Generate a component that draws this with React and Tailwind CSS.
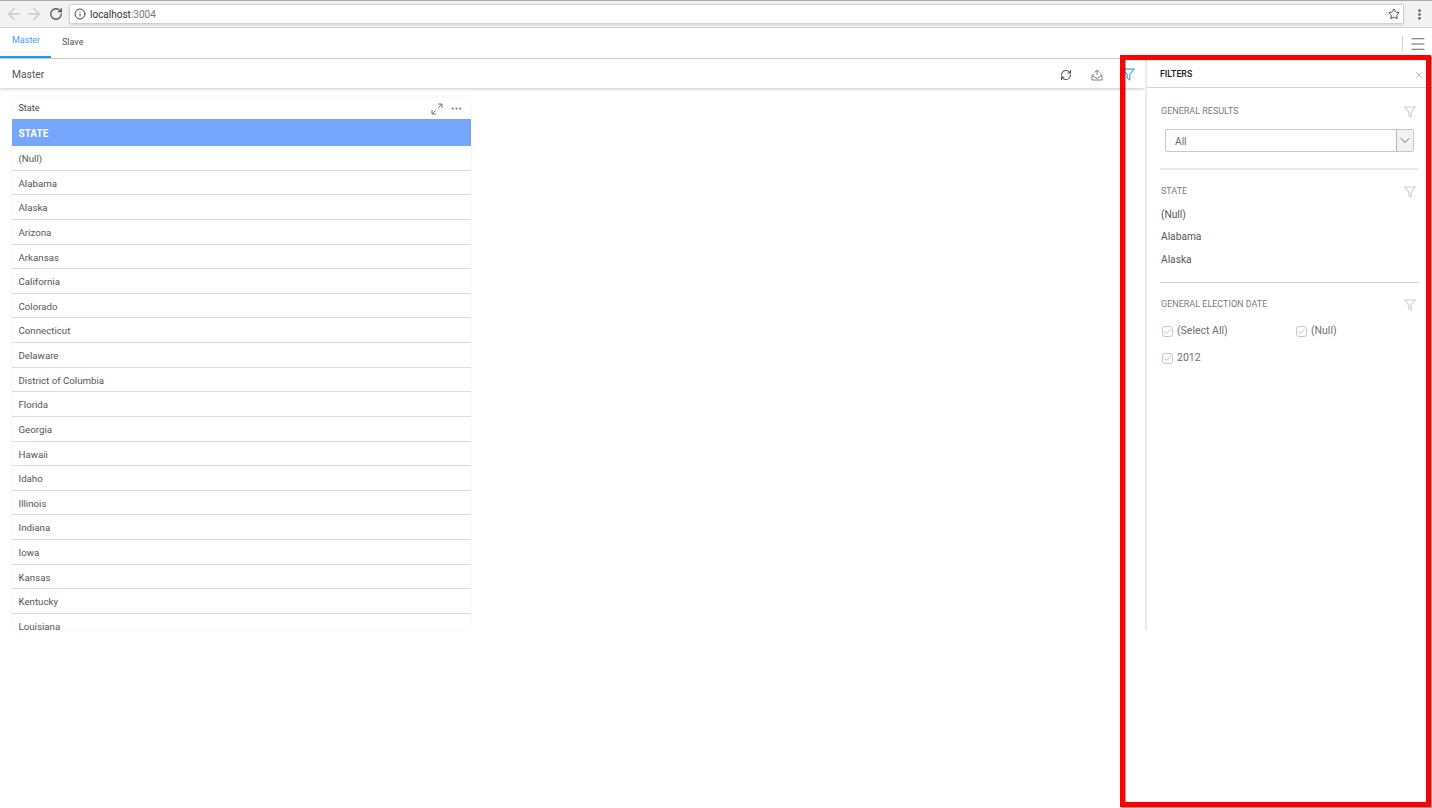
import React from 'react'
import { ArrowLeft, ArrowRight, Check, ChevronDown, Info, Menu, MoreHorizontal, RefreshCw, RotateCw, Star, X } from 'lucide-react'

const states = ['(Null)', 'Alabama', 'Alaska', 'Arizona', 'Arkansas', 'California', 'Colorado', 'Connecticut', 'Delaware', 'District of Columbia', 'Florida', 'Georgia', 'Hawaii', 'Idaho', 'Illinois', 'Indiana', 'Iowa', 'Kansas', 'Kentucky', 'Louisiana']

function Funnel({ className, width = 1 }) {
  return (
    <svg viewBox="0 0 12 12" className={className} fill="none" stroke="currentColor" strokeWidth={width}>
      <path d="M0.8 1h10.4L7.2 6v4.8L4.8 9.4V6z" />
    </svg>
  )
}

function FilterTitle({ children }) {
  return (
    <div className="h-[15px] flex items-center justify-between pl-px pr-[3px]">
      <span className="text-[9px] leading-3 text-[#7b7b7b]">{children}</span>
      <Funnel width={1.7} className="w-[12px] h-[12px] mt-[3px] text-[#dcdcdc]" />
    </div>
  )
}

function CheckItem({ label }) {
  return (
    <div className="h-[16px] flex items-center gap-[4px] pl-[2px] pt-[2px]">
      <span className="w-[11px] h-[11px] rounded-[3px] border border-[#c4c8cc] flex items-center justify-center">
        <Check size={9} strokeWidth={1.4} className="text-[#4f94f5]" />
      </span>
      <span className="text-[10.5px] text-[#6f6f6f]">{label}</span>
    </div>
  )
}

export default function App() {
  return (
    <div className="relative w-[1432px] h-[808px] overflow-hidden bg-white font-['Roboto',sans-serif]">
      {/* browser chrome */}
      <div className="h-[28px] bg-[#f2f2f2] border-t border-t-[#a8a8a8] border-b border-b-[#d0d0d0] flex items-center pl-[4.5px] pr-[6.5px]">
        <ArrowLeft size={18} strokeWidth={1.7} className="text-[#c8c8c8]" />
        <ArrowRight size={18} strokeWidth={1.7} className="ml-[2.5px] text-[#c8c8c8]" />
        <RotateCw size={14} strokeWidth={2.2} className="ml-[5.5px] text-[#555555]" />
        <div className="ml-[6.5px] flex-1 h-[20px] bg-white border border-[#cfcfcf] rounded-[2px] flex items-center pl-[4px] pr-[3px] shadow-sm">
          <Info size={12} strokeWidth={2} className="text-[#444444]" />
          <span className="ml-[4px] text-[10px] text-[#333333]">localhost<span className="text-[#777777]">:3004</span></span>
          <Star size={12} strokeWidth={2} className="ml-auto text-[#444444]" />
        </div>
        <MoreHorizontal size={13} strokeWidth={3} className="ml-[8.5px] rotate-90 text-[#555555]" />
      </div>

      {/* tabs */}
      <div className="h-[31px] border-b border-[#d4d4d4] flex">
        <div className="w-[51px] h-[30px] border-b-2 border-[#1a9cf0] pl-[12px] pt-[6px] text-[9px] leading-3 text-[#3f9df5]">Master</div>
        <div className="pl-[11px] pt-[8px] text-[9px] leading-3 text-[#555555]">Slave</div>
        <div className="ml-auto mr-[5px] mt-[8px] h-[15px] flex items-center">
          <div className="w-px h-[15px] bg-[#d0d0d0] mr-[6px]" />
          <Menu size={18} strokeWidth={1.5} className="text-[#666666]" />
        </div>
      </div>

      {/* page body */}
      <div className="flex h-[571px]">
        <div className="flex-1 min-w-0">
          <div className="h-[29px] shadow-[0_1px_3px_rgba(0,0,0,0.22)] flex items-center pl-[12px] pr-[10px] pt-[2px]">
            <span className="text-[10.3px] text-[#555555]">Master</span>
            <RefreshCw size={12} strokeWidth={2.2} className="ml-auto text-[#555555]" />
            <svg viewBox="0 0 12 12" className="ml-[19px] w-[12px] h-[12px] text-[#777777]" fill="none" stroke="currentColor" strokeWidth="0.9">
              <path d="M1 6.500v4.500h10V6.500L6 9.500zM1 6.500L3 5M11 6.500L9 5M3.500 3.500L6 1.200l2.500 2.300M6 1.500V6" />
            </svg>
            <Funnel className="ml-[19px] w-[13px] h-[13px] text-[#3f9df5]" />
          </div>

          <div className="ml-[12px] mt-[10px] w-[459px] h-[532px] overflow-hidden shadow-[0_0_3px_rgba(0,0,0,0.08)]">
            <div className="h-[21px] flex items-center pl-[6.5px] pr-[8px]">
              <span className="text-[9px] text-[#444444]">State</span>
              <svg viewBox="0 0 12 12" className="ml-auto w-[12px] h-[12px] text-[#777777]" fill="none" stroke="currentColor" strokeWidth="1">
                <path d="M7 1h4v4M11 1L7.500 4.500M5 11H1V7M1 11l3.500-3.500" />
              </svg>
              <MoreHorizontal size={13} strokeWidth={2} className="ml-[7px] text-[#777777]" />
            </div>
            <div className="h-[27px] bg-[#76a6fb] flex items-center pl-[6.5px] pt-[2px] text-[10px] font-bold text-white">STATE</div>
            {states.map((name) => (
              <div key={name} className="h-[24.63px] shrink-0 border-b border-[#dcdcdc] flex items-center pl-[6.5px] pt-[3px] text-[9.7px] text-[#555555]">{name}</div>
            ))}
          </div>
        </div>

        {/* filters panel */}
        <div className="w-[287px] h-[571px] border-l-2 border-[#e8ecf0]">
          <div className="h-[29px] border-b border-[#ccd4de] flex items-center pl-[13px] pr-[8px] pt-[3px]">
            <span className="text-[8.8px] font-medium text-[#222222]">FILTERS</span>
            <X size={10} className="ml-auto text-[#aaaaaa]" />
          </div>
          <div className="pl-[13px] pr-[13px]">
            <div className="h-[82px] pt-[15px] border-b-2 border-[#e8ecf0]">
              <FilterTitle>GENERAL RESULTS</FilterTitle>
              <div className="mx-[5px] mt-[11px] h-[23px] border border-[#c8c8c8] rounded-[2px] flex items-center pl-[9px]">
                <span className="text-[10.2px] pt-[2px] text-[#6f6f6f]">All</span>
                <span className="ml-auto w-[17px] h-full bg-[#f2f2f2] border-l border-[#b8b8b8] flex items-center justify-center">
                  <ChevronDown size={17} strokeWidth={1.3} className="text-[#555555]" />
                </span>
              </div>
            </div>
            <div className="pt-[13px] h-[113px] border-b border-[#ccd4de]">
              <FilterTitle>STATE</FilterTitle>
              <div className="mt-[9px] pl-px flex flex-col gap-[7px] text-[10.2px] leading-[15.4px] text-[#555555]">
                <span>(Null)</span>
                <span>Alabama</span>
                <span>Alaska</span>
              </div>
            </div>
            <div className="pt-[13px]">
              <FilterTitle>GENERAL ELECTION DATE</FilterTitle>
              <div className="mt-[11px] grid grid-cols-[134px_1fr] gap-y-[11px]">
                <CheckItem label="(Select All)" />
                <CheckItem label="(Null)" />
                <CheckItem label="2012" />
              </div>
            </div>
          </div>
        </div>
      </div>

      {/* red annotation drawn over the screenshot */}
      <div className="absolute left-[1120px] top-[55px] w-[311px] h-[752px] border-[5px] border-[#ff0000] shadow-[inset_1px_0_1px_rgba(0,0,0,0.4),1px_1px_1px_rgba(0,0,0,0.4)]" />
    </div>
  )
}
